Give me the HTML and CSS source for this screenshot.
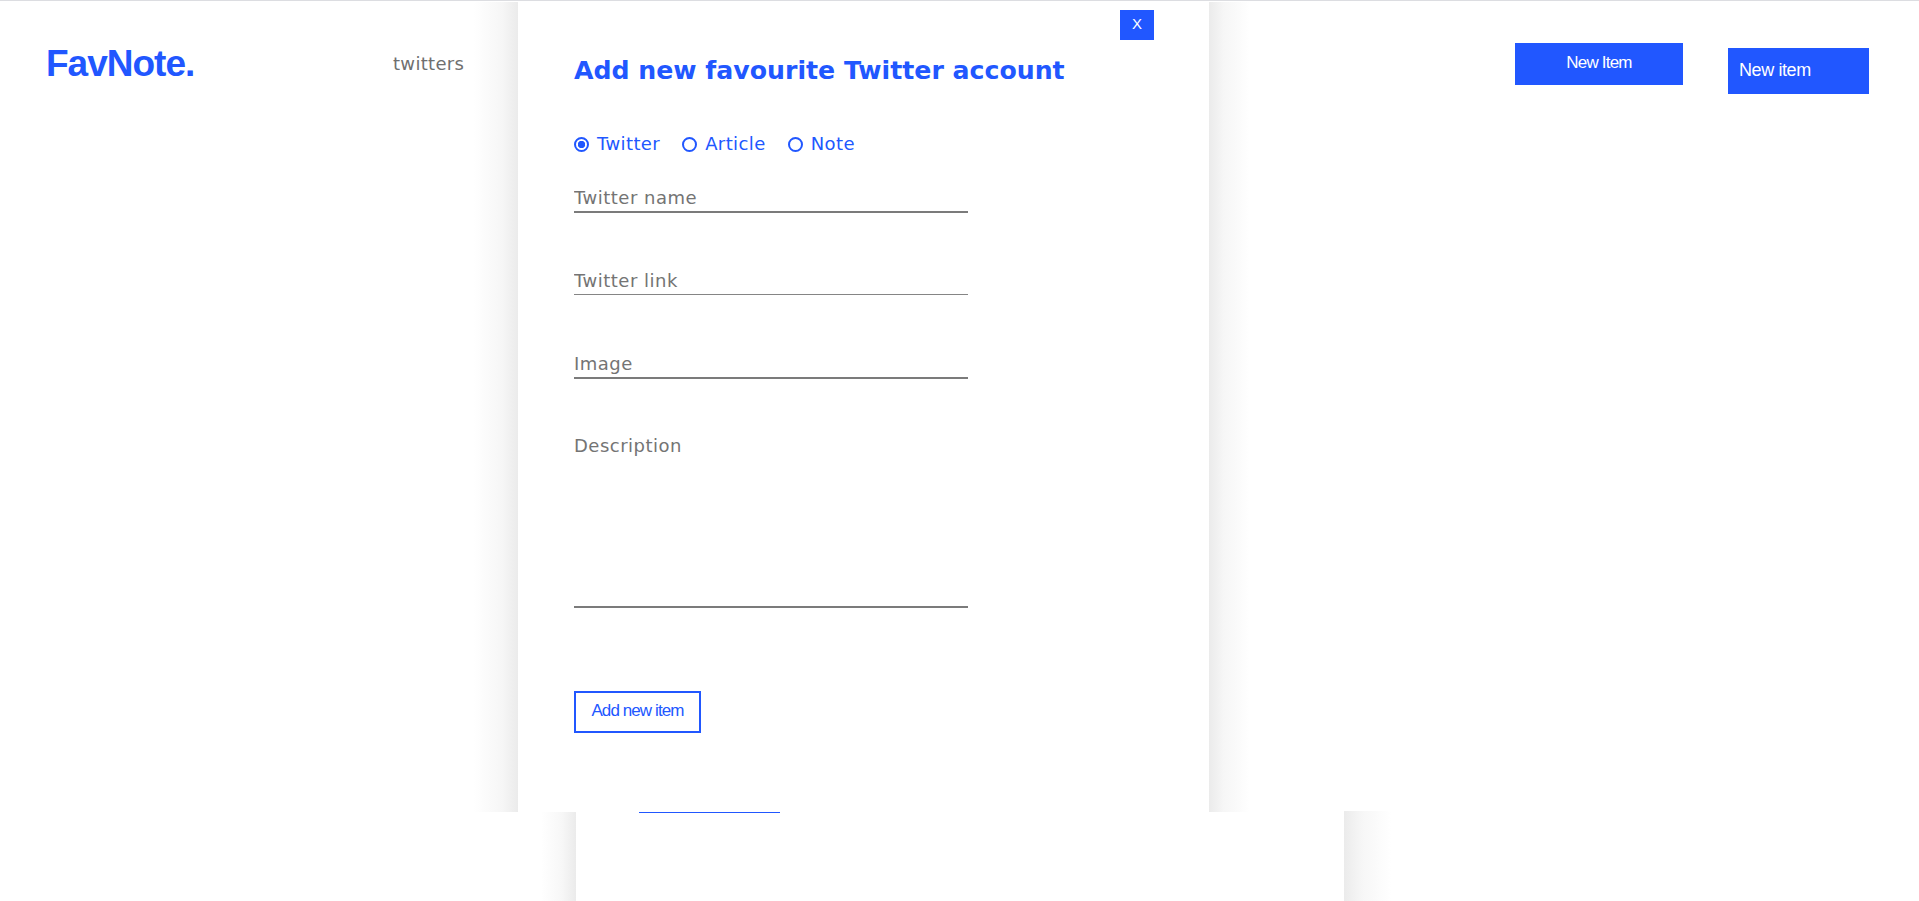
FILE: index.html
```html
<!DOCTYPE html>
<html lang="en">
<head>
<meta charset="utf-8">
<title>FavNote.</title>
<link rel="stylesheet" href="styles.css">
</head>
<body>
<div class="page">
  <header class="header">
    <div class="logo">FavNote.</div>
    <nav class="nav"><a class="nav-link" href="#">twitters</a></nav>
    <div class="spacer"></div>
    <button class="btn-new">New Item</button>
    <button class="btn-new-alt">New item</button>
  </header>

  <main class="board">
    <div class="board-accent"></div>
  </main>

  <aside class="modal">
    <div class="modal-top">
      <button class="modal-close">X</button>
    </div>
    <h2 class="modal-title">Add new favourite Twitter account</h2>
    <form class="modal-form">
      <div class="radios">
        <label class="radio-item"><input class="radio" type="radio" name="type" checked><span>Twitter</span></label>
        <label class="radio-item"><input class="radio" type="radio" name="type"><span>Article</span></label>
        <label class="radio-item"><input class="radio" type="radio" name="type"><span>Note</span></label>
      </div>
      <input class="field field-first" type="text" placeholder="Twitter name">
      <input class="field field-thin" type="text" placeholder="Twitter link">
      <input class="field field-third" type="text" placeholder="Image">
      <textarea class="field-area" placeholder="Description"></textarea>
      <button class="btn-add" type="button">Add new item</button>
    </form>
  </aside>
</div>
</body>
</html>
```

FILE: styles.css
```css
* {
  box-sizing: border-box;
}

html,
body {
  margin: 0;
  padding: 0;
  overflow: hidden;
  background: #ffffff;
}

body {
  font-family: "DejaVu Sans", sans-serif;
}

.page {
  position: relative;
  width: 1919px;
  height: 901px;
  border-top: 1px solid #dcdde1;
}

/* ---------- header ---------- */
.header {
  display: flex;
  align-items: flex-start;
  height: 110px;
  padding: 0 50px 0 46px;
}

.logo {
  width: 347px;
  margin-top: 44px;
  font-family: "Liberation Sans", Arial, sans-serif;
  font-weight: 700;
  font-size: 37px;
  line-height: 1;
  letter-spacing: -1px;
  color: #2157ff;
}

.nav {
  margin-top: 54px;
}

.nav-link {
  font-size: 18px;
  line-height: 1;
  letter-spacing: 0.3px;
  color: #6f6f6f;
  text-decoration: none;
}

.spacer {
  flex: 1;
}

.btn-new {
  margin-top: 42px;
  width: 168px;
  height: 42px;
  padding: 0 0 3px;
  border: 0;
  background: #2157ff;
  color: #ffffff;
  font-family: "Liberation Sans", Arial, sans-serif;
  font-size: 17px;
  line-height: 39px;
  letter-spacing: -0.8px;
  text-align: center;
}

.btn-new-alt {
  margin-top: 47px;
  margin-left: 45px;
  width: 141px;
  height: 46px;
  padding: 0 0 2px 11px;
  border: 0;
  background: #2157ff;
  color: #ffffff;
  font-family: "Liberation Sans", Arial, sans-serif;
  font-size: 18px;
  line-height: 44px;
  letter-spacing: -0.4px;
  text-align: left;
}

/* ---------- board card behind ---------- */
.board {
  position: relative;
  width: 768px;
  height: 90px;
  margin: 700px auto 0;
  background: #ffffff;
}

.board::before {
  content: "";
  position: absolute;
  top: 0;
  left: -35px;
  width: 35px;
  height: 100%;
  background: linear-gradient(to right, rgba(235, 235, 235, 0), #f7f7f7 60%, #ebebeb);
}

.board::after {
  content: "";
  position: absolute;
  top: 0;
  right: -47px;
  width: 47px;
  height: 100%;
  background: linear-gradient(to left, rgba(235, 235, 235, 0), #f7f7f7 60%, #ebebeb);
}

.board-accent {
  width: 141px;
  height: 2px;
  margin-left: 63px;
  background: #2157ff;
}

/* ---------- modal ---------- */
.modal {
  position: absolute;
  top: 1px;
  left: 518px;
  z-index: 10;
  width: 691px;
  height: 810px;
  padding: 8px 55px 0 56px;
  background: #ffffff;
  display: flex;
  flex-direction: column;
}

.modal::before {
  content: "";
  position: absolute;
  top: 0;
  left: -44px;
  width: 44px;
  height: 100%;
  background: linear-gradient(to right, rgba(235, 235, 235, 0), #f6f6f6 65%, #ebebeb);
}

.modal::after {
  content: "";
  position: absolute;
  top: 0;
  right: -41px;
  width: 41px;
  height: 100%;
  background: linear-gradient(to left, rgba(235, 235, 235, 0), #f6f6f6 65%, #ebebeb);
}

.modal-top {
  display: flex;
  justify-content: flex-end;
}

.modal-close {
  width: 34px;
  height: 30px;
  padding: 0 0 2px;
  border: 0;
  background: #2157ff;
  color: #ffffff;
  font-family: "Liberation Sans", Arial, sans-serif;
  font-size: 15px;
  line-height: 28px;
  text-align: center;
}

.modal-title {
  margin: 18px 0 0;
  font-size: 25.2px;
  font-weight: 700;
  line-height: 1;
  color: #2157ff;
}

.modal-form {
  display: flex;
  flex-direction: column;
  align-items: flex-start;
}

.radios {
  display: flex;
  align-items: center;
  gap: 22px;
  margin-top: 52px;
  height: 18px;
}

.radio-item {
  display: flex;
  align-items: center;
  gap: 8px;
  font-size: 18px;
  line-height: 1;
  letter-spacing: 0.4px;
  color: #2157ff;
}

.radio {
  appearance: none;
  -webkit-appearance: none;
  width: 15px;
  height: 15px;
  margin: 0;
  border: 2px solid #2157ff;
  border-radius: 50%;
  background: #ffffff;
}

.radio:checked {
  background: radial-gradient(circle, #2157ff 0 3.4px, #ffffff 4px);
}

.field {
  width: 394px;
  height: 26px;
  margin: 57px 0 0;
  padding: 0 0 3px;
  border: 0;
  border-bottom: 2px solid #7b7b7b;
  outline: none;
  background: transparent;
  font-family: "DejaVu Sans", sans-serif;
  font-size: 18px;
  line-height: 21px;
  letter-spacing: 0.5px;
  color: #555555;
}

.field-first {
  margin-top: 34px;
}

.field-thin {
  height: 25px;
  border-bottom-width: 1px;
  border-bottom-color: #858585;
}

.field-third {
  margin-top: 58px;
}

.field::placeholder,
.field-area::placeholder {
  color: #747474;
  opacity: 1;
}

.field-area {
  width: 394px;
  height: 173px;
  margin-top: 56px;
  padding: 0;
  border: 0;
  border-bottom: 2px solid #7b7b7b;
  outline: none;
  resize: none;
  background: transparent;
  font-family: "DejaVu Sans", sans-serif;
  font-size: 18px;
  line-height: 21px;
  letter-spacing: 0.5px;
  color: #555555;
}

.btn-add {
  margin-top: 83px;
  width: 127px;
  height: 42px;
  padding: 0 0 2px;
  border: 2px solid #2157ff;
  background: #ffffff;
  color: #2157ff;
  font-family: "Liberation Sans", Arial, sans-serif;
  font-size: 17px;
  line-height: 36px;
  letter-spacing: -0.9px;
  text-align: center;
}
```
